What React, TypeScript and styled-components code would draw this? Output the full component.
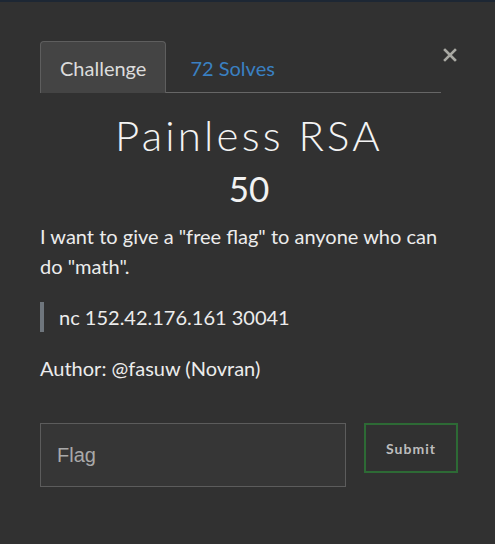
import React from "react"
import styled, { createGlobalStyle } from "styled-components"

// ■■■■■■■■■■■■■■■■■■■■■■■■■■■■■■■■■■■■■■■■■■■■■■■■■■■■■■■■■■■■■■■■■■■■■■■■■■■■■

const GlobalStyle = createGlobalStyle`
	html, body {
		margin: 0;
		padding: 0;
		background: #313131;
	}
	* {
		box-sizing: border-box;
	}
`

export default function App() {
	return (
		<Page>
			<GlobalStyle />
			<TopStrip />
			<Modal>
				<Header>
					<Tabs>
						<Tab $active>Challenge</Tab>
						<Tab>72 Solves</Tab>
					</Tabs>
					<CloseCol>
						<CloseButton aria-label="Close">
							<svg width="14" height="14" viewBox="0 0 14 14">
								<path d="M2 2 L12 12 M12 2 L2 12" stroke="#a9a9a3" strokeWidth="2.6" strokeLinecap="square" />
							</svg>
						</CloseButton>
					</CloseCol>
				</Header>

				<Title>Painless RSA</Title>
				<Points>50</Points>

				<Description>
					<p>I want to give a "free flag" to anyone who can do "math".</p>
					<Quote>nc 152.42.176.161 30041</Quote>
					<p>Author: @fasuw (Novran)</p>
				</Description>

				<FlagForm onSubmit={(e) => e.preventDefault()}>
					<FlagInput placeholder="Flag" />
					<SubmitButton type="submit">Submit</SubmitButton>
				</FlagForm>
			</Modal>
		</Page>
	)
}

// 〓〓〓〓〓〓〓〓〓〓〓〓〓〓〓〓〓〓〓〓〓〓〓〓〓〓〓〓〓〓	STYLED_COMPONENTS

const Page = styled.div`
	height: 544px;
	background: #313131;
	font-family: Lato, "Open Sans", sans-serif;
	color: #eeeeee;
	overflow: hidden;
`

const TopStrip = styled.div`
	height: 2px;
	background: #1d2734;
`

const Modal = styled.div`
	padding: 39px 0 0 40px;
`

const Header = styled.div`
	display: flex;
`

const Tabs = styled.div`
	display: flex;
	width: 401px;
	border-bottom: 1px solid #666666;
`

const Tab = styled.div<{ $active?: boolean }>`
	height: 52px;
	padding: 0 ${(p) => (p.$active ? "19px" : "23px")};
	display: flex;
	align-items: center;
	font-size: 20px;
	color: ${(p) => (p.$active ? "#dcdcdc" : "#3a80c2")};
	background: ${(p) => (p.$active ? "#444444" : "transparent")};
	border: 1px solid ${(p) => (p.$active ? "#5e5e5e" : "transparent")};
	border-bottom: none;
	border-radius: 4px 4px 0 0;
	margin-bottom: -1px;
`

const CloseCol = styled.div`
	padding: 7px 0 0 2px;
`

const CloseButton = styled.button`
	background: none;
	border: none;
	padding: 0;
	width: 14px;
	height: 14px;
	display: block;
	cursor: pointer;
	svg {
		display: block;
	}
`

const Title = styled.h1`
	width: 418px;
	margin: 17px 0 0;
	text-align: center;
	font-size: 42px;
	font-weight: 300;
	line-height: 50px;
	letter-spacing: 3.2px;
	color: #f4f4f4;
`

const Points = styled.div`
	width: 418px;
	margin-top: 7px;
	text-align: center;
	font-size: 35px;
	line-height: 42px;
	color: #f2f2f2;
`

const Description = styled.div`
	width: 401px;
	margin-top: 12px;
	font-size: 20px;
	line-height: 30px;
	color: #ececec;

	p {
		margin: 0 0 21px;
	}
`

const Quote = styled.blockquote`
	margin: 0 0 21px;
	padding-left: 15px;
	border-left: 4px solid #6f767d;
`

const FlagForm = styled.form`
	display: flex;
	align-items: flex-start;
	gap: 18px;
	margin-top: 40px;
`

const FlagInput = styled.input`
	width: 306px;
	height: 64px;
	padding: 0 16px;
	background: #363636;
	border: 1px solid #5c5c5c;
	color: #dddddd;
	font-family: "Liberation Sans", Arial, sans-serif;
	font-size: 20px;
	outline: none;

	&::placeholder {
		color: #a9a9a9;
	}
`

const SubmitButton = styled.button`
	width: 94px;
	height: 50px;
	background: transparent;
	border: 2px solid #2d6a35;
	color: #bdbdbd;
	font-family: Lato, sans-serif;
	font-weight: 700;
	font-size: 14px;
	letter-spacing: 1px;
	cursor: pointer;
`
